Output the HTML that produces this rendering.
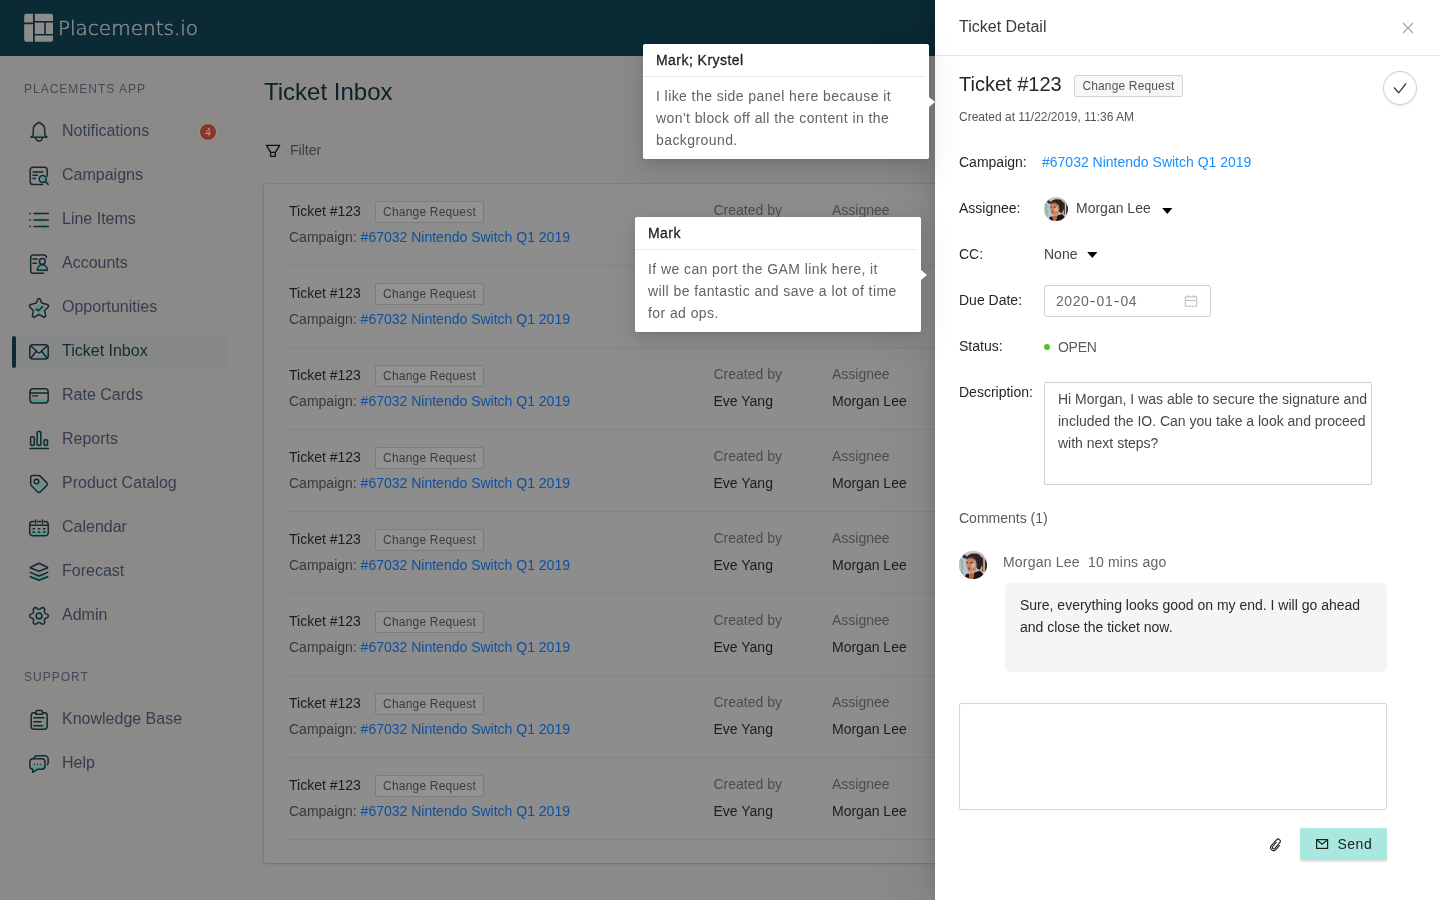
<!DOCTYPE html>
<html lang="en">
<head>
<meta charset="utf-8">
<title>Ticket Inbox</title>
<style>
*{box-sizing:border-box;margin:0;padding:0}
html,body{width:1440px;height:900px;overflow:hidden}
body{position:relative;background:#8b8a88;font-family:"Liberation Sans",Arial,sans-serif;font-size:14px;color:#222;-webkit-font-smoothing:antialiased}
#root{position:absolute;left:0;top:0;width:1440px;height:900px;will-change:transform}
.abs{position:absolute;white-space:nowrap}
/* ---------- top bar ---------- */
#topbar{position:absolute;left:0;top:0;width:1440px;height:56px;background:#0a2a35}
#topbar .brand{position:absolute;left:58px;top:14px;font-family:"DejaVu Sans","Liberation Sans",sans-serif;font-weight:200;font-size:20px;line-height:28px;color:#8c8c8c;-webkit-text-stroke:.450px #8c8c8c;letter-spacing:0}
/* ---------- sidebar ---------- */
.sec{position:absolute;left:24px;font-size:12px;line-height:16px;letter-spacing:1px;color:#434a59}
.nav{position:absolute;left:12px;width:216px;height:32px}
.nav.on{background:#858887;border-radius:2px}
.nav.on:before{content:"";position:absolute;left:0;top:0;width:4px;height:32px;background:#0a2a35;border-radius:2px}
.nav span{position:absolute;left:50px;top:3px;font-size:16px;line-height:24px;color:#353d4e;white-space:nowrap}
.nav.on span{color:#152a33}
.nav svg{position:absolute;left:14px;top:3px;width:26px;height:26px;overflow:visible}
.badge{position:absolute;left:200px;top:124px;width:16px;height:16px;border-radius:8px;background:#86392a;color:#c09d93;font-size:10px;line-height:17.500px;box-shadow:0 0 0 1px rgba(255,255,255,.08);text-align:center}
/* ---------- main ---------- */
#title{left:264px;top:76px;font-size:24px;line-height:32px;color:#0c2129}
#filter{left:290px;top:139px;font-size:14px;line-height:22px;color:#3d3d3d}
#card{position:absolute;left:264px;top:184px;width:900px;height:679px;background:#8d8d8d;border-radius:3px;box-shadow:0 0 0 1px rgba(0,0,0,.07),0 1px 3px rgba(0,0,0,.12)}
.row{position:absolute;left:25px;width:1100px;height:82px}
.row:after{content:"";position:absolute;left:-1px;top:81px;width:1100px;height:1px;background:#848484}
.row .t{left:0;top:16px;line-height:22px;color:#1c1c1c}
.row .tag{left:86px;top:17px;width:109px;height:22px;border:1px solid #7b7b7b;background:#929292;border-radius:2px;font-size:12px;line-height:20px;text-align:center;color:#3c3c3c;letter-spacing:.200px}
.row .c{left:0;top:42px;line-height:22px;color:#383838}
.row .c b{font-weight:normal;color:#0d50a0}
.row .l1{left:424.5px;top:15px;line-height:22px;color:#4c4c4c}
.row .v1{left:424.5px;top:42px;line-height:22px;color:#1c1c1c}
.row .l2{left:543px;top:15px;line-height:22px;color:#4c4c4c}
.row .v2{left:543px;top:42px;line-height:22px;color:#1c1c1c}
.av{filter:blur(.55px)}
.hy{display:inline-block;width:7.2px;text-align:center;transform:scaleX(1.35);letter-spacing:0}
/* ---------- drawer ---------- */
#drawer{position:absolute;left:935px;top:0;width:505px;height:900px;background:#fff;box-shadow:-6px 0 16px -8px rgba(0,0,0,.1),-9px 0 28px 0 rgba(0,0,0,.07),-12px 0 48px 16px rgba(0,0,0,.04)}
#drawer .lab{left:24px;line-height:22px;color:#262626}
.dtag{left:139px;top:75px;width:109px;height:22px;border:1px solid #d4d4d4;background:#f7f7f7;border-radius:2px;font-size:12px;line-height:20px;text-align:center;color:#555;letter-spacing:.150px}
#okbtn{left:449px;top:72px;width:32px;height:32px;border-radius:16px;background:#fff;box-shadow:0 0 0 1px #d2d2d2,0 2px 3px rgba(0,0,0,.1)}
#send{left:365px;top:828px;width:87px;height:32px;border-radius:2px;background:#a8e8df;box-shadow:0 2px 2px rgba(0,0,0,.12)}
/* ---------- popovers ---------- */
.pop{position:absolute;width:286px;height:115px;background:#fff;border-radius:2px;box-shadow:0 3px 6px -4px rgba(0,0,0,.14),0 6px 16px 0 rgba(0,0,0,.1),0 9px 28px 8px rgba(0,0,0,.06)}
.pop .pt{position:absolute;left:13px;top:5px;line-height:22px;color:#1f1f1f;letter-spacing:.450px;-webkit-text-stroke:.3px #1f1f1f;white-space:nowrap}
.pop:before{content:"";position:absolute;left:0;top:32px;width:282px;height:1px;background:#ececec}
.pop .pb{position:absolute;left:13px;top:41px;line-height:22px;color:#636363;letter-spacing:.420px;white-space:nowrap}
.pop i{position:absolute;left:286px;width:0;height:0;border-left:6px solid #fff;border-top:5px solid transparent;border-bottom:5px solid transparent}
</style>
</head>
<body>
<div id="root">
<svg width="0" height="0" style="position:absolute"><defs>
<filter id="bl" x="-10%" y="-10%" width="120%" height="120%"><feGaussianBlur stdDeviation=".75"/></filter>
<clipPath id="cc"><circle cx="14" cy="14" r="14"/></clipPath>
<g id="avatar"><g clip-path="url(#cc)"><rect width="28" height="28" fill="#b2c6cc"/><g filter="url(#bl)">
<rect x="-2" y="-2" width="32" height="4.500" fill="#cfc3c0"/>
<rect x="-2" y="2" width="10" height="30" fill="#aec8d1"/>
<path d="M2,8L3.500,11L2.500,14L4,17L2.500,20L4,23" stroke="#9c9a7c" stroke-width="1.600" fill="none" opacity=".75"/>
<rect x="18" y="2" width="12" height="30" fill="#c9aca3"/>
<path d="M22,6C26,7 28.500,11 28.500,15C28.500,18 27,20 25,21L22,19Z" fill="#3a2c2b"/>
<rect x="24.300" y="6" width="1.500" height="17" fill="#dcc4bd"/>
<ellipse cx="21.600" cy="17.200" rx="2" ry="3" fill="#c9ab66"/>
<path d="M3.500,5.500C4.500,3.600 6.500,3.600 7.500,5L8,7.500L5,7.500Z" fill="#2a2a2e"/>
<path d="M7,8C8,3.500 13,1.800 18,2.800C22,3.800 23.500,7.500 23,12C22.700,15 22,17.500 20.500,19L17.500,17L17,9L10,7.500Z" fill="#2b2325"/>
<path d="M7.500,9C8.500,5.800 11,5.600 14,6.300L17.200,9L16.500,10.200L9,9.500Z" fill="#7d4332"/>
<path d="M7.400,9.500C9,6.800 14.500,7 16.500,10C18,13 18,17 16.500,20L13,22.500L9.500,20.500C7.800,17.500 6.800,13 7.400,9.500Z" fill="#c48466"/>
<ellipse cx="14.300" cy="14.200" rx="2.200" ry="2.800" fill="#d6ad97"/>
<path d="M11,20L16,19.500L16.500,25L11,25Z" fill="#cf9a80"/>
<path d="M6.500,24C7.500,22.500 9,22.500 10,23L11,29H5Z" fill="#161616"/>
<path d="M15.500,21.500L20,20C23,20.500 24.500,23 25,29H13Z" fill="#151515"/>
<path d="M10,22.500L14,22L15,25L13.500,29L10.500,29Z" fill="#cc5f38"/>
<ellipse cx="10" cy="17.500" rx="1.100" ry=".900" fill="#c22a28"/>
<ellipse cx="8.200" cy="11.700" rx=".900" ry=".600" fill="#3d2a2a"/>
<ellipse cx="12.600" cy="11.700" rx="1.300" ry=".700" fill="#3d2a2a"/>
<path d="M17.500,12C18.500,12.500 18.500,15 17.500,16" stroke="#5a3a33" stroke-width="1" fill="none"/>
</g></g></g>
</defs></svg>
<div id="topbar"><svg class="abs" style="left:24px;top:13px" width="30" height="30" viewBox="0 0 30 30" fill="#8c8c8c"><path d="M2.2,.8H9V9.6H.2V2.8A2,2 0 0 1 2.2,.8Z"/><path d="M.2,11.2H9V28.8H2.2A2,2 0 0 1 .2,26.8Z"/><path d="M10.8,.8H27A2,2 0 0 1 29,2.800V8H10.8Z"/><rect x="10.800" y="9.600" width="9.400" height="11.400"/><rect x="21.800" y="9.600" width="7.200" height="11.400"/><path d="M10.800,22.600H29V26.800A2,2 0 0 1 27,28.800H10.800Z"/></svg><div class="brand">Placements.io</div></div>
<div class="sec" style="top:81px">PLACEMENTS APP</div>
<div class="sec" style="top:669px">SUPPORT</div>
<div class="nav" style="top:116px"><span>Notifications</span></div>
<div class="nav" style="top:160px"><span>Campaigns</span></div>
<div class="nav" style="top:204px"><span>Line Items</span></div>
<div class="nav" style="top:248px"><span>Accounts</span></div>
<div class="nav" style="top:292px"><span>Opportunities</span></div>
<div class="nav on" style="top:336px"><span>Ticket Inbox</span></div>
<div class="nav" style="top:380px"><span>Rate Cards</span></div>
<div class="nav" style="top:424px"><span>Reports</span></div>
<div class="nav" style="top:468px"><span>Product Catalog</span></div>
<div class="nav" style="top:512px"><span>Calendar</span></div>
<div class="nav" style="top:556px"><span>Forecast</span></div>
<div class="nav" style="top:600px"><span>Admin</span></div>
<div class="nav" style="top:704px"><span>Knowledge Base</span></div>
<div class="nav" style="top:748px"><span>Help</span></div>
<div class="badge">4</div>
<svg class="abs" style="left:0;top:56px" width="240" height="844" viewBox="0 56 240 844" fill="none" stroke="#15292f" stroke-width="1.5" stroke-linecap="round" stroke-linejoin="round">
<path d="M35.4,136.6A3.6,3 0 0 1 42.600,136.600Z" fill="#5b948b" stroke="none"/>
<path d="M31,137.200C32.600,136.300 33.300,135.200 33.300,133.500V129.500C33.300,126.200 35.300,124.200 37.600,123.500C37.400,122.600 38,122.400 39,122.400C40,122.400 40.600,122.600 40.400,123.500C42.700,124.200 44.700,126.200 44.700,129.500V133.500C44.700,135.200 45.400,136.300 47,137.200Z"/>
<path d="M35.600,137.600A3.400,3.500 0 0 0 42.400,137.600"/>
<circle cx="42.7" cy="179" r="3" fill="#5b948b" stroke="none"/>
<path d="M47.200,176.200V170A2.800,2.800 0 0 0 44.400,167.200H33A2.800,2.800 0 0 0 30.200,170V181.700A2.800,2.800 0 0 0 33,184.500H42.500"/>
<path d="M33,172H42.800M33,175.300H37.300M33,178.500H35.400"/>
<circle cx="42.7" cy="179" r="3.500"/><path d="M45.400,181.700L48.200,184.400"/>
<circle cx="37.3" cy="213.5" r="2.600" fill="#5b948b" stroke="none"/>
<circle cx="41" cy="220" r="2.600" fill="#5b948b" stroke="none"/>
<circle cx="44.3" cy="226.5" r="2.600" fill="#5b948b" stroke="none"/>
<path d="M34,213.500H48.300M34,220H48.300M34,226.500H48.300M29.700,213.500H30.300M29.700,220H30.300M29.700,226.500H30.300"/>
<path d="M38.200,269.400C38.400,266.500 40,265.400 42.300,265.400C44.600,265.400 46.200,266.500 46.400,269.400Z" fill="#5b948b" stroke="none"/><path d="M40,271.300H48.600V269.500L46.500,270.500Z" fill="#5b948b" stroke="none" opacity=".8"/>
<path d="M46.500,257.600A2.800,2.800 0 0 0 43.800,254.900H33.500A2.800,2.800 0 0 0 30.700,257.700V270.400A2.800,2.800 0 0 0 33.500,273.200H43.700"/>
<path d="M33,259H37.300M33,263.200H36.500"/>
<circle cx="42.300" cy="261.400" r="2.900"/>
<path d="M37.300,270.200C37.300,266.700 39.600,264.800 42.300,264.800C45,264.800 47.300,266.700 47.300,270.200Z"/>
<circle cx="39" cy="308.700" r="4.200" fill="#5b948b" stroke="none"/>
<path d="M38.0,298.7L40.0,298.7L41.7,303.1L48.0,304.7L48.6,306.5L44.5,310.7L45.7,316.2L44.1,317.4L39.0,314.5L33.9,317.4L32.3,316.2L33.5,310.7L29.4,306.5L30.0,304.7L36.3,303.1Z"/>
<path d="M36,309.200L38.300,310.700L42.700,306.500"/>
<path d="M47.400,350.500V357A1.500,1.500 0 0 1 45.900,358.500H39.300Z" fill="#5b948b" stroke="none"/>
<rect x="29.800" y="344.700" width="18.400" height="14.400" rx="3"/>
<path d="M30.700,345.700L37.700,352.200C38.500,352.900 39.500,352.900 40.300,352.200L47.300,345.700M30.700,358.300L36.400,351.200M47.300,358.300L41.600,351.200"/>
<path d="M30.600,399H47.600V400.500A2.200,2.200 0 0 1 45.400,402.600H32.800A2.200,2.200 0 0 1 30.600,400.500Z" fill="#5b948b" stroke="none"/>
<rect x="30" y="388.800" width="18.200" height="14.200" rx="3.200"/>
<path d="M30,393H48.200" stroke-width="1.700"/><path d="M32.600,395.900H37.700" stroke-width="1.300"/>
<g stroke="#5b948b" opacity=".75"><rect x="31.600" y="437.400" width="3.700" height="8.500" rx="1.100"/><rect x="38.100" y="432.200" width="3.700" height="13.700" rx="1.100"/><rect x="45" y="440.400" width="3.500" height="5.500" rx="1.100"/></g>
<rect x="30.600" y="436.800" width="3.700" height="8.500" rx="1.100"/><rect x="37.100" y="431.600" width="3.700" height="13.700" rx="1.100"/><rect x="44" y="439.800" width="3.500" height="5.500" rx="1.100"/><path d="M29.700,448.600H48.300"/>
<circle cx="39.800" cy="485" r="4" fill="#5b948b" stroke="none"/>
<path d="M32.700,475.600H38.600C39.300,475.600 39.900,475.900 40.400,476.400L46.600,482.600C47.500,483.500 47.500,484.700 46.600,485.600L40.500,491.700C39.600,492.600 38.400,492.600 37.500,491.700L31.500,485.700C31,485.200 30.700,484.600 30.700,483.900V477.600A2,2 0 0 1 32.700,475.600Z"/>
<circle cx="36.500" cy="481.500" r="2.300"/>
<path d="M30.400,532H47.600V533.200A2.400,2.400 0 0 1 45.200,535.400H32.800A2.400,2.400 0 0 1 30.400,533.200Z" fill="#5b948b" stroke="none"/>
<path d="M33.700,521.500H32.700A3,3 0 0 0 29.700,524.500V532.800A3,3 0 0 0 32.700,535.800H45.300A3,3 0 0 0 48.300,532.800V524.500A3,3 0 0 0 45.300,521.500H44.300M37.300,521.500H40.700M35.500,519.900V523.200M42.500,519.900V523.200M29.700,525.300H48.300"/>
<path d="M32.500,528.700H35M37.700,528.700H40.300M43,528.700H45.500M32.500,532H35M37.700,532H40.300M43,532H45.500" stroke-width="1.400" stroke-linecap="butt"/>
<path d="M39,572.600L47.400,576.400L39,580.200L30.600,576.400Z" fill="#5b948b" stroke="none"/>
<path d="M39,563.300L47.300,567.200C47.800,567.400 47.800,567.800 47.300,568L39,571.300L30.700,568C30.200,567.800 30.200,567.400 30.700,567.200Z"/>
<path d="M30.200,572.400L39,576L47.800,572.400M30.200,576.800L39,580.300L47.800,576.800"/>
<circle cx="40" cy="617" r="3.200" fill="#5b948b" stroke="none"/>
<path d="M48.2,615.9L48.2,616.5L47.9,617.1L47.5,617.6L46.6,617.9L45.8,618.2L45.3,618.5L44.9,618.8L44.7,619.2L44.5,619.6L44.4,620.0L44.4,620.6L44.6,621.5L44.7,622.4L44.5,623.0L44.1,623.5L43.6,623.9L43.1,624.1L42.4,624.2L41.8,624.1L41.0,623.5L40.4,622.9L39.9,622.6L39.4,622.5L39.0,622.4L38.6,622.5L38.1,622.6L37.6,622.9L37.0,623.5L36.2,624.1L35.6,624.2L34.9,624.1L34.4,623.9L33.9,623.5L33.5,623.0L33.3,622.4L33.4,621.5L33.6,620.6L33.6,620.0L33.5,619.6L33.3,619.2L33.1,618.8L32.7,618.5L32.2,618.2L31.4,617.9L30.5,617.6L30.1,617.1L29.8,616.5L29.8,615.9L29.8,615.3L30.1,614.7L30.5,614.2L31.4,613.9L32.2,613.6L32.7,613.3L33.1,613.0L33.3,612.6L33.5,612.2L33.6,611.8L33.6,611.2L33.4,610.3L33.3,609.4L33.5,608.8L33.9,608.3L34.4,607.9L34.9,607.7L35.6,607.6L36.2,607.7L37.0,608.3L37.6,608.9L38.1,609.2L38.6,609.3L39.0,609.4L39.4,609.3L39.9,609.2L40.4,608.9L41.0,608.3L41.8,607.7L42.4,607.6L43.1,607.7L43.6,607.9L44.1,608.3L44.5,608.8L44.7,609.4L44.6,610.3L44.4,611.2L44.4,611.8L44.5,612.2L44.7,612.6L44.9,613.0L45.3,613.3L45.8,613.6L46.6,613.9L47.5,614.2L47.9,614.7L48.2,615.3Z"/>
<circle cx="39" cy="615.900" r="2.900" fill="#8b8a88" fill-opacity=".55"/>
<path d="M46.400,720.500V726.600A2,2 0 0 1 44.400,728.600H39.300Z" fill="#5b948b" stroke="none"/>
<path d="M35.600,712.800H33.900A2.700,2.700 0 0 0 31.200,715.500V726.600A2.700,2.700 0 0 0 33.900,729.300H44.500A2.700,2.700 0 0 0 47.200,726.600V715.500A2.700,2.700 0 0 0 44.500,712.800H42.800"/>
<path d="M37.300,710.500H41.100C41.700,710.500 42,710.800 42.200,711.300L42.800,713.200C43,713.800 42.600,714.300 42,714.300H36.400C35.800,714.300 35.400,713.800 35.600,713.200L36.200,711.300C36.400,710.800 36.700,710.500 37.300,710.500Z"/>
<path d="M33.800,717.700H44M33.800,721.700H41.300M33.800,725.700H42.500"/>
<path d="M32.200,765H44.500V766.300A3,3 0 0 1 41.500,769.300H37.300L33,772V769.200A3,3 0 0 1 32.200,765Z" fill="#5b948b" stroke="none"/>
<path d="M33.200,758.800H41.800A3.200,3.200 0 0 1 45,762V766.100A3.200,3.200 0 0 1 41.800,769.300H37.500L32.700,772.300V769.300A3.200,3.200 0 0 1 29.800,766.100V762A3.200,3.200 0 0 1 33.200,758.800Z"/>
<path d="M33.800,758.400C34.300,756.700 35.500,755.700 37.300,755.700H44.700A3.500,3.500 0 0 1 48.200,759.200V762.500C48.200,763.500 47.900,764.200 47.400,764.700"/>
<g fill="#15292f" stroke="none"><circle cx="34.500" cy="764.300" r=".7"/><circle cx="37.500" cy="764.300" r=".7"/><circle cx="40.500" cy="764.300" r=".7"/></g>
</svg>

<div id="title" class="abs">Ticket Inbox</div>
<svg class="abs" style="left:264px;top:142px" width="18" height="18" viewBox="264 142 18 18" fill="none" stroke="#0e0e0e" stroke-width="1.300" stroke-linejoin="round" stroke-linecap="round"><path d="M266.500,145.400H279.700L275.400,152.300V156.300H270.600V152.300ZM270.600,152.300H275.400"/></svg>
<div id="filter" class="abs">Filter</div>
<div id="card">
<div class="row" style="top:0px"><div class="abs t">Ticket #123</div><div class="abs tag">Change Request</div><div class="abs c">Campaign: <b>#67032 Nintendo Switch Q1 2019</b></div><div class="abs l1">Created by</div><div class="abs v1">Eve Yang</div><div class="abs l2">Assignee</div><div class="abs v2">Morgan Lee</div></div>
<div class="row" style="top:82px"><div class="abs t">Ticket #123</div><div class="abs tag">Change Request</div><div class="abs c">Campaign: <b>#67032 Nintendo Switch Q1 2019</b></div><div class="abs l1">Created by</div><div class="abs v1">Eve Yang</div><div class="abs l2">Assignee</div><div class="abs v2">Morgan Lee</div></div>
<div class="row" style="top:164px"><div class="abs t">Ticket #123</div><div class="abs tag">Change Request</div><div class="abs c">Campaign: <b>#67032 Nintendo Switch Q1 2019</b></div><div class="abs l1">Created by</div><div class="abs v1">Eve Yang</div><div class="abs l2">Assignee</div><div class="abs v2">Morgan Lee</div></div>
<div class="row" style="top:246px"><div class="abs t">Ticket #123</div><div class="abs tag">Change Request</div><div class="abs c">Campaign: <b>#67032 Nintendo Switch Q1 2019</b></div><div class="abs l1">Created by</div><div class="abs v1">Eve Yang</div><div class="abs l2">Assignee</div><div class="abs v2">Morgan Lee</div></div>
<div class="row" style="top:328px"><div class="abs t">Ticket #123</div><div class="abs tag">Change Request</div><div class="abs c">Campaign: <b>#67032 Nintendo Switch Q1 2019</b></div><div class="abs l1">Created by</div><div class="abs v1">Eve Yang</div><div class="abs l2">Assignee</div><div class="abs v2">Morgan Lee</div></div>
<div class="row" style="top:410px"><div class="abs t">Ticket #123</div><div class="abs tag">Change Request</div><div class="abs c">Campaign: <b>#67032 Nintendo Switch Q1 2019</b></div><div class="abs l1">Created by</div><div class="abs v1">Eve Yang</div><div class="abs l2">Assignee</div><div class="abs v2">Morgan Lee</div></div>
<div class="row" style="top:492px"><div class="abs t">Ticket #123</div><div class="abs tag">Change Request</div><div class="abs c">Campaign: <b>#67032 Nintendo Switch Q1 2019</b></div><div class="abs l1">Created by</div><div class="abs v1">Eve Yang</div><div class="abs l2">Assignee</div><div class="abs v2">Morgan Lee</div></div>
<div class="row" style="top:574px"><div class="abs t">Ticket #123</div><div class="abs tag">Change Request</div><div class="abs c">Campaign: <b>#67032 Nintendo Switch Q1 2019</b></div><div class="abs l1">Created by</div><div class="abs v1">Eve Yang</div><div class="abs l2">Assignee</div><div class="abs v2">Morgan Lee</div></div>
</div>

<div id="drawer">
<div class="abs" style="left:24px;top:15px;font-size:16px;line-height:24px;color:#3a3a3a">Ticket Detail</div>
<svg class="abs" style="left:466px;top:21px" width="14" height="14" viewBox="0 0 14 14" fill="none" stroke="#a3a3a3" stroke-width="1.100"><path d="M2,2L12,12M12,2L2,12"/></svg>
<div class="abs" style="left:0;top:55px;width:505px;height:1px;background:#e6e6e6"></div>
<div class="abs" style="left:24px;top:70px;font-size:20px;line-height:28px;color:#262626">Ticket #123</div>
<div class="abs dtag">Change Request</div>
<div class="abs" id="okbtn"><svg width="32" height="32" viewBox="0 0 32 32" fill="none" stroke="#3c3c3c" stroke-width="1.300"><path d="M10,15.500L14.700,20.800L22,11.500"/></svg></div>
<div class="abs" style="left:24px;top:108px;font-size:12px;line-height:18px;color:#555">Created at 11/22/2019, 11:36 AM</div>
<div class="abs lab" style="top:151px">Campaign:</div>
<div class="abs" style="left:107px;top:151px;line-height:22px;color:#1890ff">#67032 Nintendo Switch Q1 2019</div>
<div class="abs lab" style="top:197px">Assignee:</div>
<svg class="abs av" style="left:109px;top:197px" width="24" height="24" viewBox="0 0 28 28"><use href="#avatar"/></svg>
<div class="abs" style="left:141px;top:197px;line-height:22px;color:#464646">Morgan Lee</div>
<svg class="abs" style="left:227px;top:208px" width="11" height="6" viewBox="0 0 11 6"><path d="M.200,0H10.400L5.300,5.900Z" fill="#000"/></svg>
<div class="abs lab" style="top:243px">CC:</div>
<div class="abs" style="left:109px;top:243px;line-height:22px;color:#464646">None</div>
<svg class="abs" style="left:152px;top:252px" width="11" height="6" viewBox="0 0 11 6"><path d="M.200,0H10.400L5.300,5.900Z" fill="#000"/></svg>
<div class="abs lab" style="top:289px">Due Date:</div>
<div class="abs" style="left:109px;top:285px;width:167px;height:32px;border:1px solid #d0d0d0;border-radius:3px"></div>
<div class="abs" style="left:121px;top:290px;line-height:22px;color:#6a6a6a;letter-spacing:.550px">2020<span class="hy">-</span>01<span class="hy">-</span>04</div>
<svg class="abs" style="left:249px;top:294px" width="14" height="14" viewBox="0 0 14 14" fill="none" stroke="#bcbcbc" stroke-width="1"><rect x="1.300" y="2.800" width="11.400" height="9.400"/><path d="M1.300,6.400H12.700M4.100,1V3.500M9.900,1V3.500"/></svg>
<div class="abs lab" style="top:335px">Status:</div>
<div class="abs" style="left:109px;top:344px;width:6px;height:6px;border-radius:3px;background:#52c41a"></div>
<div class="abs" style="left:123px;top:336px;line-height:22px;color:#5c5c5c;letter-spacing:-.300px">OPEN</div>
<div class="abs lab" style="top:381px">Description:</div>
<div class="abs" style="left:109px;top:382px;width:328px;height:103px;border:1px solid #d0d0d0;border-radius:2px"></div>
<div class="abs" style="left:123px;top:388px;line-height:22px;color:#484848">Hi Morgan, I was able to secure the signature and<br>included the IO. Can you take a look and proceed<br>with next steps?</div>
<div class="abs" style="left:24px;top:507px;line-height:22px;color:#595959">Comments (1)</div>
<svg class="abs av" style="left:24px;top:551px" width="28" height="28" viewBox="0 0 28 28"><use href="#avatar"/></svg>
<div class="abs" style="left:68px;top:551px;line-height:22px;color:#646464;letter-spacing:.200px">Morgan Lee&nbsp; 10 mins ago</div>
<div class="abs" style="left:70px;top:583px;width:382px;height:89px;background:#f5f5f5;border-radius:5px"></div>
<div class="abs" style="left:85px;top:594px;line-height:22px;color:#2a2a2a">Sure, everything looks good on my end. I will go ahead<br>and close the ticket now.</div>
<div class="abs" style="left:24px;top:703px;width:428px;height:107px;border:1px solid #d6d6d6;border-radius:2px"></div>
<svg class="abs" style="left:332px;top:836px" width="18" height="18" viewBox="1267 836 18 18" fill="none" stroke="#222" stroke-width="1.100" stroke-linecap="round" stroke-linejoin="round"><path transform="translate(1275.900,845) rotate(41)" d="M3,-2V3.500A3,3 0 0 1 -3,3.500V-4.300A2.200,2.200 0 0 1 1.400,-4.300V3.200A1.400,1.400 0 0 1 -1.400,3.200V-2.200"/></svg>
<div class="abs" id="send"><svg class="abs" style="left:16px;top:11px" width="13" height="11" viewBox="0 0 13 11" fill="none" stroke="#1e1e1e" stroke-width="1.200"><rect x=".600" y=".600" width="11" height="8.800"/><path d="M.600,.800L6.100,5.200L11.600,.800"/></svg><span class="abs" style="left:37.500px;top:5px;line-height:22px;color:#232323;letter-spacing:.500px">Send</span></div>
</div>

<div class="pop" style="left:643px;top:44px"><div class="pt">Mark; Krystel</div><div class="pb">I like the side panel here because it<br>won't block off all the content in the<br>background.</div><i style="top:53px"></i></div>
<div class="pop" style="left:635px;top:217px"><div class="pt">Mark</div><div class="pb">If we can port the GAM link here, it<br>will be fantastic and save a lot of time<br>for ad ops.</div><i style="top:53px"></i></div>

</div>
</body>
</html>
